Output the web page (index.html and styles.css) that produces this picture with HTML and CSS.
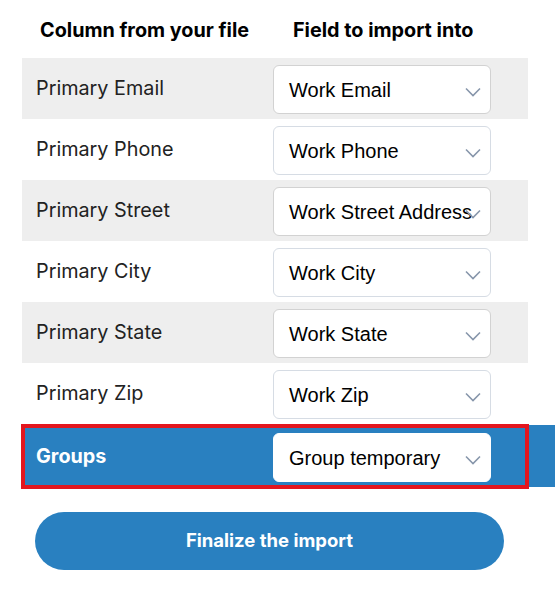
FILE: index.html
```html
<!DOCTYPE html>
<html>
<head>
<meta charset="utf-8">
<link rel="stylesheet" href="styles.css">
</head>
<body>
<div class="page">
  <div class="head">
    <div class="h1">Column from your file</div>
    <div class="h2">Field to import into</div>
  </div>
  <div class="rows">
    <div class="row alt"><div class="label">Primary Email</div><div class="sel">Work Email<svg class="chev" viewBox="0 0 16 10"><path d="M1 1.5 L8 8.5 L15 1.5"/></svg></div></div>
    <div class="row"><div class="label">Primary Phone</div><div class="sel">Work Phone<svg class="chev" viewBox="0 0 16 10"><path d="M1 1.5 L8 8.5 L15 1.5"/></svg></div></div>
    <div class="row alt"><div class="label">Primary Street</div><div class="sel">Work Street Address<svg class="chev" viewBox="0 0 16 10"><path d="M1 1.5 L8 8.5 L15 1.5"/></svg></div></div>
    <div class="row"><div class="label">Primary City</div><div class="sel">Work City<svg class="chev" viewBox="0 0 16 10"><path d="M1 1.5 L8 8.5 L15 1.5"/></svg></div></div>
    <div class="row alt"><div class="label">Primary State</div><div class="sel">Work State<svg class="chev" viewBox="0 0 16 10"><path d="M1 1.5 L8 8.5 L15 1.5"/></svg></div></div>
    <div class="row"><div class="label">Primary Zip</div><div class="sel">Work Zip<svg class="chev" viewBox="0 0 16 10"><path d="M1 1.5 L8 8.5 L15 1.5"/></svg></div></div>
    <div class="row active"><div class="label">Groups</div><div class="sel">Group temporary<svg class="chev" viewBox="0 0 16 10"><path d="M1 1.5 L8 8.5 L15 1.5"/></svg></div></div>
  </div>
  <div class="actions">
    <button class="btn">Finalize the import</button>
  </div>
</div>
</body>
</html>
```
FILE: styles.css
```css
html, body { margin: 0; padding: 0; background: #fff; }
body { font-family: Inter, "Noto Sans", sans-serif; color: #1a1a1a; width: 555px; height: 594px; overflow: hidden; }
.page { padding: 0 0 0 22px; }
.head { display: grid; grid-template-columns: 251px auto; height: 58px; align-items: center; font-weight: 700; font-size: 19.8px; color: #000; padding-top: 2px; box-sizing: border-box; }
.h1 { padding-left: 18px; }
.h2 { padding-left: 20px; }
.rows { display: flex; flex-direction: column; width: 506px; }
.row { display: grid; grid-template-columns: 251px 218px; height: 61px; align-items: start; position: relative; }
.row.alt { background: #eeeeee; }
.label { padding-left: 14px; font-size: 19.8px; color: #222; line-height: 24px; margin-top: 18px; }
.sel { position: relative; margin-top: 7px; box-sizing: border-box; height: 49px; background: #fff; border: 1px solid #d6dce4; border-radius: 6px; font-family: "Liberation Sans", Arial, sans-serif; font-size: 20px; color: #000; display: flex; align-items: center; padding-left: 15px; padding-top: 2px; white-space: nowrap; overflow: hidden; }
.row.alt .sel { border-color: #d2d2d2; }
.chev { position: absolute; right: 9px; top: 21px; width: 16px; height: 10px; fill: none; stroke: #8796ab; stroke-width: 1.6; }
.row.active { background: #2980c0; width: 533px; height: 62px; margin-top: 1px; }
.row.active .sel { margin-top: 8px; }
.row.active .label { margin-top: 19px; }
.row.active::after { content: ""; position: absolute; left: -1px; top: -1px; width: 500px; height: 57px; border: 4px solid #e3161e; }
.row.active .label { color: #fff; font-weight: 700; }
.row.active .sel { border-color: #fff; }
.actions { padding: 25px 0 0 13px; }
.btn { width: 469px; height: 58px; border: none; border-radius: 29px; background: #2980c0; color: #fff; font-family: Inter, "Noto Sans", sans-serif; font-weight: 700; font-size: 18.5px; padding: 0; padding-bottom: 2px; }
```
